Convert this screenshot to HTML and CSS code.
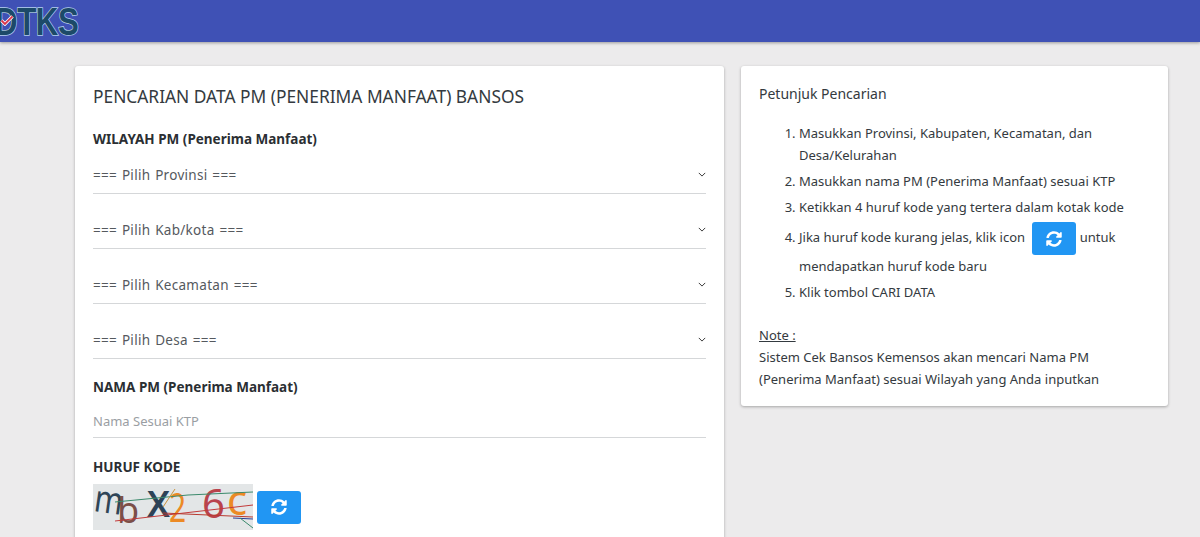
FILE: index.html
```html
<!DOCTYPE html>
<html lang="id">
<head>
    <meta charset="UTF-8">
    <meta name="viewport" content="width=device-width, initial-scale=1.0">
    <title>Cek Bansos</title>
    <link rel="stylesheet" href="styles.css">
</head>
<body>
    <nav class="navbar">
        <div class="logo">
            <span class="logo-text">DTKS</span>
            <svg class="logo-check" viewBox="0 0 20 16">
                <path d="M2 8l5 5L18 2" fill="none" stroke="#fff" stroke-width="5"/>
                <path d="M2 8l5 5L18 2" fill="none" stroke="#d9344a" stroke-width="2.6"/>
            </svg>
        </div>
    </nav>
    <main class="content">
        <section class="card card-form">
            <h1 class="card-title">PENCARIAN DATA PM (PENERIMA MANFAAT) BANSOS</h1>
            <h2 class="field-label">WILAYAH PM (Penerima Manfaat)</h2>
            <div class="select-row">
                <select><option>=== Pilih Provinsi ===</option></select>
                <svg class="chevron" viewBox="0 0 10 6"><path d="M1 1l4 4 4-4"/></svg>
            </div>
            <div class="select-row">
                <select><option>=== Pilih Kab/kota ===</option></select>
                <svg class="chevron" viewBox="0 0 10 6"><path d="M1 1l4 4 4-4"/></svg>
            </div>
            <div class="select-row">
                <select><option>=== Pilih Kecamatan ===</option></select>
                <svg class="chevron" viewBox="0 0 10 6"><path d="M1 1l4 4 4-4"/></svg>
            </div>
            <div class="select-row">
                <select><option>=== Pilih Desa ===</option></select>
                <svg class="chevron" viewBox="0 0 10 6"><path d="M1 1l4 4 4-4"/></svg>
            </div>
            <h2 class="field-label label-nama">NAMA PM (Penerima Manfaat)</h2>
            <input class="text-input" type="text" placeholder="Nama Sesuai KTP">
            <h2 class="field-label label-kode">HURUF KODE</h2>
            <div class="captcha-row">
                <svg class="captcha" viewBox="0 0 160 46">
                    <rect width="160" height="46" fill="#e3e6e7"/>
                    <text transform="translate(0 27) rotate(8) scale(0.8 1)" class="cap-m" fill="#2f4557">m</text>
                    <text x="24" y="39" class="cap-b" fill="#7c4f48">b</text>
                    <text x="54" y="33" class="cap-x" fill="#2d4256">X</text>
                    <text transform="translate(76 38) scale(0.75 1)" class="cap-d" fill="#ec8a25">2</text>
                    <text x="109" y="34" class="cap-d" fill="#b9434c">6</text>
                    <text x="134" y="31" class="cap-c" fill="#ec8a25">c</text>
                    <path d="M22 18L95 11 160 8" stroke="#3b8a6c" fill="none"/>
                    <path d="M22 37L160 21" stroke="#c23b3b" fill="none"/>
                    <path d="M70 29L160 33" stroke="#b8392f" fill="none"/>
                    <path d="M140 34L160 35" stroke="#2b3f94" fill="none"/>
                    <path d="M147 34L160 44" stroke="#3b8a6c" fill="none"/>
                    <path d="M70 23L82 5" stroke="#c9933f" fill="none"/>
                </svg>
                <button class="btn-refresh" type="button">
                    <svg viewBox="0 0 512 512"><path d="M370.72 133.28C339.458 104.008 298.888 87.962 255.848 88c-77.458.068-144.328 53.178-162.791 126.85-1.344 5.363-6.122 9.15-11.651 9.15H24.103c-7.498 0-13.194-6.807-11.807-14.176C33.933 94.924 134.813 8 256 8c66.448 0 126.791 26.136 171.315 68.685L463.03 40.97C478.149 25.851 504 36.559 504 57.941V192c0 13.255-10.745 24-24 24H345.941c-21.382 0-32.09-25.851-16.971-40.971l41.75-41.749zM32 296h134.059c21.382 0 32.09 25.851 16.971 40.971l-41.75 41.75c31.262 29.273 71.835 45.319 114.876 45.28 77.418-.07 144.315-53.144 162.787-126.849 1.344-5.363 6.122-9.15 11.651-9.15h57.304c7.498 0 13.194 6.807 11.807 14.176C478.067 417.076 377.187 504 256 504c-66.448 0-126.791-26.136-171.315-68.685L48.97 471.03C33.851 486.149 8 475.441 8 454.059V320c0-13.255 10.745-24 24-24z"/></svg>
                </button>
            </div>
        </section>
        <aside class="card card-help">
            <h3 class="help-title">Petunjuk Pencarian</h3>
            <ol class="help-list">
                <li>Masukkan Provinsi, Kabupaten, Kecamatan, dan Desa/Kelurahan</li>
                <li>Masukkan nama PM (Penerima Manfaat) sesuai KTP</li>
                <li>Ketikkan 4 huruf kode yang tertera dalam kotak kode</li>
                <li>Jika huruf kode kurang jelas, klik icon
                    <button class="btn-refresh btn-inline" type="button">
                        <svg viewBox="0 0 512 512"><path d="M370.72 133.28C339.458 104.008 298.888 87.962 255.848 88c-77.458.068-144.328 53.178-162.791 126.85-1.344 5.363-6.122 9.15-11.651 9.15H24.103c-7.498 0-13.194-6.807-11.807-14.176C33.933 94.924 134.813 8 256 8c66.448 0 126.791 26.136 171.315 68.685L463.03 40.97C478.149 25.851 504 36.559 504 57.941V192c0 13.255-10.745 24-24 24H345.941c-21.382 0-32.09-25.851-16.971-40.971l41.75-41.749zM32 296h134.059c21.382 0 32.09 25.851 16.971 40.971l-41.75 41.75c31.262 29.273 71.835 45.319 114.876 45.28 77.418-.07 144.315-53.144 162.787-126.849 1.344-5.363 6.122-9.15 11.651-9.15h57.304c7.498 0 13.194 6.807 11.807 14.176C478.067 417.076 377.187 504 256 504c-66.448 0-126.791-26.136-171.315-68.685L48.97 471.03C33.851 486.149 8 475.441 8 454.059V320c0-13.255 10.745-24 24-24z"/></svg>
                    </button>
                    untuk mendapatkan huruf kode baru</li>
                <li>Klik tombol CARI DATA</li>
            </ol>
            <p class="note"><u>Note :</u><br>Sistem Cek Bansos Kemensos akan mencari Nama PM (Penerima Manfaat) sesuai Wilayah yang Anda inputkan</p>
        </aside>
    </main>
</body>
</html>
```

FILE: styles.css
```css
html, body {
    height: 537px;
    overflow: hidden;
}
body {
    margin: 0;
    background: #ecebec;
    color: #212529;
    font-family: "Noto Sans", sans-serif;
    font-size: 13px;
}
.navbar {
    height: 42px;
    background: #3f51b5;
    box-shadow: 0 1px 3px rgba(0, 0, 0, 0.35);
    overflow: hidden;
}
.logo {
    position: relative;
    width: 80px;
    height: 42px;
    overflow: hidden;
}
.logo-text {
    display: block;
    margin-left: -5px;
    font-family: "Liberation Sans", sans-serif;
    font-size: 39px;
    font-weight: bold;
    line-height: 44px;
    letter-spacing: -0.5px;
    color: #1c4a68;
    -webkit-text-stroke: 1.5px #b5d0ee;
    paint-order: stroke fill;
    transform: scaleX(0.8);
    transform-origin: left center;
}
.logo-check {
    position: absolute;
    top: 15px;
    left: 0;
    width: 14px;
    height: 11px;
}
.content {
    display: grid;
    grid-template-columns: 649px 427px;
    gap: 17px;
    align-items: start;
    padding: 24px 32px 0 75px;
}
.card {
    background: #fff;
    border-radius: 3px;
    box-shadow: 0 1px 3px rgba(0, 0, 0, 0.3);
}
.card-form {
    padding: 18px 18px 40px;
}
.card-title {
    margin: 0 0 20px;
    font-size: 17.35px;
    font-weight: 400;
    line-height: 25px;
    color: #343a40;
}
.field-label {
    margin: 0 0 1px;
    font-size: 13.5px;
    font-weight: 700;
    line-height: 20px;
    color: #2b2f33;
}
.label-nama {
    margin-top: 18px;
}
.label-kode {
    margin-top: 19px;
}
.select-row {
    display: grid;
    align-items: center;
    height: 36px;
    padding-top: 7px;
    margin-bottom: 11px;
    border-bottom: 1px solid #d5d7d9;
}
.select-row select,
.select-row .chevron {
    grid-area: 1 / 1;
}
.select-row select {
    width: 100%;
    border: none;
    outline: none;
    padding: 0;
    background: transparent;
    appearance: none;
    font: inherit;
    font-size: 13.5px;
    letter-spacing: 0.3px;
    word-spacing: 1px;
    color: #55595e;
}
.chevron {
    justify-self: end;
    width: 8px;
    height: 5px;
    margin: 0 0 2px;
    fill: none;
    stroke: #333;
    stroke-width: 1.2;
}
.text-input {
    display: block;
    box-sizing: border-box;
    width: 100%;
    height: 40px;
    border: none;
    border-bottom: 1px solid #d5d7d9;
    outline: none;
    padding: 6px 0 0;
    font: inherit;
}
.text-input::placeholder {
    color: #9a9ea3;
}
.captcha-row {
    display: flex;
    align-items: center;
    gap: 4px;
    margin-top: 7px;
}
.captcha {
    width: 160px;
    height: 46px;
}
.cap-m {
    font-size: 38px;
}
.cap-b {
    font-size: 36px;
}
.cap-x {
    font-size: 36px;
    font-weight: 600;
}
.cap-d {
    font-size: 40px;
}
.cap-c {
    font-size: 42px;
}
.btn-refresh {
    display: inline-flex;
    align-items: center;
    justify-content: center;
    width: 44px;
    height: 33px;
    padding: 0;
    border: none;
    border-radius: 3px;
    background: #2196f3;
    cursor: pointer;
}
.btn-refresh svg {
    width: 16px;
    height: 16px;
    fill: #fff;
}
.btn-inline {
    margin: 0 0 0 4px;
    vertical-align: middle;
}
.card-help {
    padding: 17px 18px 16px;
}
.help-title {
    margin: 0 0 17px;
    font-size: 14px;
    font-weight: 400;
    line-height: 22px;
    color: #343a40;
}
.help-list {
    margin: 0 0 21px;
    padding-left: 40px;
}
.help-list li {
    line-height: 22px;
    margin-bottom: 4px;
    color: #343a40;
}
.note {
    margin: 0;
    line-height: 22px;
    color: #343a40;
}
```
